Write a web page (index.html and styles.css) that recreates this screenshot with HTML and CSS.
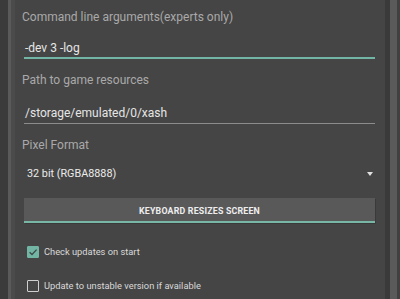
FILE: index.html
```html
<!DOCTYPE html>
<html lang="en">
<head>
  <meta charset="UTF-8" />
  <meta name="viewport" content="width=device-width, initial-scale=1.0"/>
  <title>Launcher settings</title>
  <link rel="stylesheet" href="styles.css">
</head>
<body>
  <div class="screen">
    <div class="edge-left"></div>
    <div class="content">
      <div class="label first">Command line arguments(experts only)</div>
      <div class="field active">-dev 3 -log</div>

      <div class="label">Path to game resources</div>
      <div class="field path">/storage/emulated/0/xash</div>

      <div class="label">Pixel Format</div>
      <div class="spinner">
        <span>32 bit (RGBA8888)</span>
        <span class="arrow"></span>
      </div>

      <button class="toggle-button">KEYBOARD RESIZES SCREEN</button>

      <div class="check-row">
        <span class="box checked">
          <svg width="10" height="10" viewBox="0 0 10 10">
            <path d="M1.6 5.2 L4 7.5 L8.6 2.6" fill="none" stroke="#3d4a46" stroke-width="1.3"/>
          </svg>
        </span>
        <span class="check-text">Check updates on start</span>
      </div>
      <div class="check-row second">
        <span class="box"></span>
        <span class="check-text">Update to unstable version if available</span>
      </div>
    </div>
    <div class="edge-right"></div>
  </div>
</body>
</html>
```

FILE: styles.css
```css
html, body {
  margin: 0;
  padding: 0;
  background: #454545;
  font-family: Roboto, "Noto Sans", sans-serif;
}
.screen {
  display: flex;
  width: 400px;
  height: 299px;
  overflow: hidden;
}
.edge-left {
  width: 15px;
  flex: none;
  background: linear-gradient(to right, #3b3b3b 0, #3b3b3b 8px, #5a5a5a 8px, #5a5a5a 11px, #4b4b4b 11px);
}
.edge-right {
  width: 15px;
  flex: none;
  background: linear-gradient(to right, #3a3a3a 0, #3a3a3a 5px, #5a5a5a 5px, #5a5a5a 12px, #404040 12px);
}
.content {
  flex: 1;
  background: #454545;
  padding: 0 10px 0 9px;
}
.label {
  color: #a9a9a9;
  font-size: 12px;
  line-height: 14px;
  margin-left: -2px;
  margin-top: 14px;
}
.label.first {
  margin-top: 10px;
}
.field {
  color: #e6e6e6;
  font-size: 12px;
  line-height: 14px;
  margin-top: 17px;
  padding: 0 0 2px 1px;
  border-bottom: 1px solid #8c8c8c;
}
.field.path {
  margin-top: 19px;
  padding-bottom: 3px;
}
.field.active {
  border-bottom: 2px solid #73b5a5;
  padding-bottom: 2px;
}
.spinner {
  display: flex;
  align-items: center;
  justify-content: space-between;
  color: #ececec;
  font-size: 10.8px;
  line-height: 13px;
  margin-top: 15px;
  padding: 0 2px 0 3px;
}
.arrow {
  width: 0;
  height: 0;
  border-left: 3.5px solid transparent;
  border-right: 3.5px solid transparent;
  border-top: 4px solid #e0e0e0;
  margin-top: 1px;
}
.toggle-button {
  display: block;
  width: 100%;
  height: 25px;
  margin-top: 18px;
  background: #5a595a;
  color: #eeeeee;
  border: none;
  border-bottom: 2px solid #78b6a6;
  box-shadow: 1px 1px 0 #3a3a3a;
  font-family: Roboto, "Noto Sans", sans-serif;
  font-size: 8.8px;
  font-weight: bold;
  letter-spacing: 0.2px;
  padding: 2px 0 0;
}
.check-row {
  display: flex;
  align-items: center;
  margin-top: 23px;
  padding-left: 3px;
}
.check-row.second {
  margin-top: 22px;
}
.box {
  width: 10px;
  height: 10px;
  border: 1px solid #cfcfcf;
  border-radius: 1px;
  flex: none;
  display: flex;
  align-items: center;
  justify-content: center;
}
.box.checked {
  background: #73b5a5;
  border-color: #73b5a5;
}
.box svg {
  flex: none;
}
.check-text {
  color: #d9d9d9;
  font-size: 9.3px;
  line-height: 12px;
  margin-left: 5px;
}
```
